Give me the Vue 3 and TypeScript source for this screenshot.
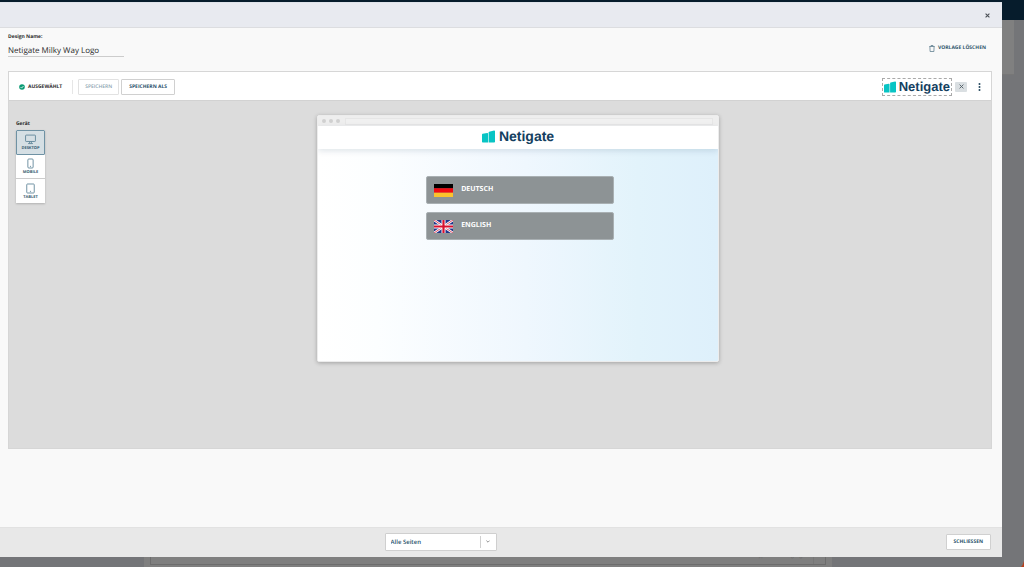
<script setup lang="ts">
import { ref } from 'vue'

type DeviceId = 'desktop' | 'mobile' | 'tablet'

const devices: { id: DeviceId; label: string }[] = [
  { id: 'desktop', label: 'Desktop' },
  { id: 'mobile', label: 'Mobile' },
  { id: 'tablet', label: 'Tablet' },
]

const languages = [
  { code: 'de', label: 'DEUTSCH' },
  { code: 'en', label: 'ENGLISH' },
]

const designName = ref('Netigate Milky Way Logo')
const device = ref<DeviceId>('desktop')
const pageFilter = ref('all')
</script>

<template>
  <div class="app">
    <div class="under-page" aria-hidden="true">
      <div class="under-nav"></div>
      <div class="under-panel"></div>
      <div class="under-bottom"><div class="under-frame"><span>Ref.: type-select-language</span><i></i></div></div>
      <svg class="corner" viewBox="0 0 4 6"><path d="M4 0V6H1Q3 4 4 0Z" fill="#b8401c" /></svg>
    </div>

    <section class="modal" role="dialog" aria-label="Design">
      <header class="modal-head">
        <button class="icon-btn" type="button" aria-label="Fenster schließen">
          <svg width="5" height="5" viewBox="0 0 5 5"><path d="M.6.6 4.4 4.4M4.4.6.6 4.4" stroke="#4a4f55" stroke-width="1.1" /></svg>
        </button>
      </header>

      <div class="modal-body">
        <div class="name-row">
          <div class="name-field">
            <label for="design-name">Design Name:</label>
            <input id="design-name" v-model="designName" type="text" />
          </div>
          <button class="delete-btn" type="button">
            <svg width="6" height="7" viewBox="0 0 6 7" fill="none" stroke="#4f7184" stroke-width=".7">
              <path d="M.3 1.5H5.7M2 1.4V.5H4V1.4M.9 1.6 1.1 6.5H4.9L5.1 1.6" />
            </svg>
            VORLAGE LÖSCHEN
          </button>
        </div>

        <div class="card">
          <div class="toolbar">
            <span class="selected">
              <svg width="6" height="6" viewBox="0 0 6 6"><circle cx="3" cy="3" r="2.8" fill="#0a9b74" /><path d="M1.6 3.1 2.6 4.1 4.5 2" fill="none" stroke="#fff" stroke-width=".8" /></svg>
              AUSGEWÄHLT
            </span>
            <button class="btn" type="button" disabled>SPEICHERN</button>
            <button class="btn btn-as" type="button">SPEICHERN ALS</button>
            <div class="toolbar-end">
              <div class="logo-slot">
                <svg width="12" height="12" viewBox="0 0 13 12"><path d="M0 4.2Q0 3.5.6 3.3L5.2 2.4Q6 2.3 6 3.1V12H.7Q0 12 0 11.3ZM6.6 2.2Q6.6 1.4 7.2 1.2L12 .1Q13 0 13 .8V11.2Q13 12 12.2 12H6.6Z" fill="#08c4c4" /></svg>
                <span class="logo-word">Netigate</span>
              </div>
              <button class="remove" type="button" aria-label="Logo entfernen">
                <svg width="5" height="5" viewBox="0 0 5 5"><path d="M.6.6 4.4 4.4M4.4.6.6 4.4" stroke="#4f5b64" stroke-width=".9" /></svg>
              </button>
              <button class="icon-btn" type="button" aria-label="Mehr">
                <svg width="3" height="8" viewBox="0 0 3 8" fill="#24485e"><circle cx="1.5" cy="1.1" r="1" /><circle cx="1.5" cy="4" r="1" /><circle cx="1.5" cy="6.9" r="1" /></svg>
              </button>
            </div>
          </div>

          <div class="canvas">
            <div class="devices">
              <span id="device-label" class="device-title">Gerät</span>
              <div class="device-list" role="group" aria-labelledby="device-label">
                <button
                  v-for="d in devices"
                  :key="d.id"
                  type="button"
                  class="device"
                  :class="{ active: device === d.id }"
                  :aria-pressed="device === d.id"
                  @click="device = d.id"
                >
                  <svg width="11" height="11" viewBox="0 0 10 10" fill="none" stroke="#5f8598" stroke-width=".8">
                    <template v-if="d.id === 'desktop'">
                      <rect x=".5" y="1" width="9" height="5.8" rx=".6" />
                      <path d="M4.2 6.8V8.4M5.8 6.8V8.4M2.8 8.7H7.2" />
                    </template>
                    <template v-else-if="d.id === 'mobile'">
                      <rect x="2.6" y=".9" width="4.8" height="8.2" rx=".9" />
                      <path d="M4.5 7.6H5.5" />
                    </template>
                    <template v-else>
                      <rect x="1.6" y=".9" width="6.8" height="8.2" rx=".7" />
                      <path d="M4.5 7.6H5.5" />
                    </template>
                  </svg>
                  <span>{{ d.label.toUpperCase() }}</span>
                </button>
              </div>
            </div>

            <div class="stage">
              <div class="preview">
                <div class="browser-bar"><i></i><i></i><i></i><b></b></div>
                <div class="preview-head">
                  <svg width="13" height="13" viewBox="0 0 13 12"><path d="M0 4.2Q0 3.5.6 3.3L5.2 2.4Q6 2.3 6 3.1V12H.7Q0 12 0 11.3ZM6.6 2.2Q6.6 1.4 7.2 1.2L12 .1Q13 0 13 .8V11.2Q13 12 12.2 12H6.6Z" fill="#08c4c4" /></svg>
                  <span class="logo-word large">Netigate</span>
                </div>
                <div class="preview-page">
                  <button v-for="l in languages" :key="l.code" type="button" class="lang">
                    <svg v-if="l.code === 'de'" width="19" height="13" viewBox="0 0 19 13">
                      <path d="M0 0H19V4.4H0Z" fill="#000" /><path d="M0 4.3H19V8.7H0Z" fill="#f10a12" /><path d="M0 8.7H19V13H0Z" fill="#fcc32c" />
                    </svg>
                    <svg v-else width="19" height="13" viewBox="0 0 19 13">
                      <path d="M0 0H19V13H0Z" fill="#21368c" />
                      <path d="M0 0 19 13M19 0 0 13" stroke="#fff" stroke-width="2.4" />
                      <path d="M0 0 19 13M19 0 0 13" stroke="#d8203b" stroke-width=".8" />
                      <path d="M9.5 0V13M0 6.5H19" stroke="#fff" stroke-width="4" />
                      <path d="M9.5 0V13M0 6.5H19" stroke="#d8102f" stroke-width="2.2" />
                    </svg>
                    <span>{{ l.label }}</span>
                  </button>
                </div>
              </div>
            </div>
          </div>
        </div>
      </div>

      <footer class="modal-foot">
        <span></span>
        <div class="select-box">
          <select v-model="pageFilter" aria-label="Seiten">
            <option value="all">Alle Seiten</option>
          </select>
          <span class="select-arrow">
            <svg width="4" height="3" viewBox="0 0 4 3"><path d="M.4.6 2 2.2 3.6.6" fill="none" stroke="#777" stroke-width=".8" /></svg>
          </span>
        </div>
        <button class="btn btn-close" type="button">SCHLIESSEN</button>
      </footer>
    </section>
  </div>
</template>

<style>
body {
  margin: 0;
}
</style>

<style scoped>
.app,
.app * {
  box-sizing: border-box;
}
.app {
  position: relative;
  min-height: 100vh;
  display: flex;
  background: #747578;
  font-family: "Open Sans", "Noto Sans", sans-serif;
  font-size: 5px;
  line-height: 8px;
  text-rendering: geometricPrecision;
  color: #2b2b2b;
}
button,
input,
select {
  margin: 0;
  padding: 0;
  font: inherit;
  text-rendering: inherit;
  color: inherit;
  border: 0;
  background: none;
}
.under-page {
  position: absolute;
  inset: 0;
  display: flex;
  flex-direction: column;
  overflow: hidden;
}
.under-nav {
  height: 20px;
  background: #061c2c;
}
.under-panel {
  height: 55px;
  margin-right: 10px;
  background: #808080;
  border-bottom: 1px solid #777;
}
.under-bottom {
  margin: auto 192px 0 144px;
  height: 24px;
  padding: 0 6px;
  background: #7f7f7f;
}
.under-frame {
  height: 22px;
  display: flex;
  align-items: flex-end;
  justify-content: flex-end;
  gap: 8px;
  border: 1px solid #6d6d6d;
  border-top: 0;
  color: #636363;
}
.under-frame span {
  line-height: 16px;
}
.under-frame i {
  width: 12px;
  height: 16px;
  border-left: 1px solid #777;
}
.corner {
  position: absolute;
  right: 0;
  bottom: 0;
  width: 4px;
  height: 6px;
}
.modal {
  position: absolute;
  inset: 2px 22px 10px 0;
  display: flex;
  flex-direction: column;
  background: #f9f9f9;
}
.modal-head {
  height: 26px;
  display: flex;
  align-items: center;
  justify-content: flex-end;
  padding-right: 12px;
  background: #e8eaf0;
  border-top: 1px solid #dfe3ea;
  border-bottom: 1px solid #dcdde0;
}
.icon-btn {
  display: flex;
}
.modal-body {
  flex: 1;
  display: flex;
  flex-direction: column;
  padding: 5px 10px 78px 8px;
}
.name-row {
  display: flex;
  justify-content: space-between;
  align-items: center;
  height: 38px;
  padding-bottom: 8px;
}
.name-field {
  display: flex;
  flex-direction: column;
  width: 116px;
  align-self: flex-start;
}
.name-field label {
  font-weight: 700;
}
.name-field input {
  height: 16px;
  padding-top: 4px;
  font-size: 8px;
  border-bottom: 1px solid #ccc;
}
.delete-btn {
  display: flex;
  align-items: center;
  gap: 3px;
  margin-right: 6px;
  font-weight: 700;
  color: #2f566c;
}
.card {
  flex: 1;
  display: flex;
  flex-direction: column;
  border: 1px solid #d6d6d6;
}
.toolbar {
  height: 29px;
  display: flex;
  align-items: center;
  padding: 1px 10px 0;
  background: #fff;
  border-bottom: 1px solid #d2d2d2;
}
.selected {
  display: flex;
  align-items: center;
  gap: 3px;
  height: 14px;
  padding-right: 10px;
  margin-right: 5px;
  border-right: 1px solid #e6e6e6;
  font-weight: 700;
}
.btn {
  height: 16px;
  padding: 0 7px;
  background: #fff;
  border: 1px solid #d0d0d0;
  border-radius: 1px;
  font-weight: 700;
  color: #28506a;
}
.btn:disabled {
  padding: 0 6px;
  font-weight: 600;
  color: #8ba4b1;
  border-color: #e2e2e2;
}
.btn-as {
  margin-left: 2px;
}
.toolbar-end {
  display: flex;
  align-items: center;
  gap: 3px;
  margin-left: auto;
}
.toolbar-end .icon-btn {
  margin-left: 8px;
}
.logo-slot {
  display: flex;
  align-items: center;
  gap: 3px;
  height: 18px;
  padding: 0 1px;
  border: 1px dashed #aaa;
}
.logo-word {
  font-family: "Liberation Sans", Arial, sans-serif;
  font-weight: 700;
  font-size: 13px;
  line-height: 16px;
  color: #14405f;
}
.logo-word.large {
  font-size: 14px;
}
.remove {
  display: flex;
  align-items: center;
  justify-content: center;
  width: 12px;
  height: 10px;
  background: #dadfe2;
  border-radius: 1px;
}
.canvas {
  flex: 1;
  display: flex;
  align-items: flex-start;
  padding: 14px 0 0 7px;
  background: #dcdcdc;
}
.devices {
  display: flex;
  flex-direction: column;
  gap: 2px;
  padding-top: 5px;
}
.device-title {
  font-weight: 700;
}
.device-list {
  width: 29px;
  background: #fff;
  box-shadow: 0 1px 2px #0003;
}
.device {
  display: flex;
  flex-direction: column;
  align-items: center;
  justify-content: center;
  gap: 1px;
  width: 100%;
  height: 24px;
  padding-top: 1px;
  border-bottom: 1px solid #ccc;
  font-size: 4px;
  line-height: 6px;
  font-weight: 700;
  color: #355b70;
}
.device:last-child {
  border-bottom: 0;
}
.device.active {
  height: 25px;
  background: #d5dfe4;
  border: 1px solid #6f92a4;
  border-radius: 1px;
}
.stage {
  flex: 1;
  display: flex;
  justify-content: center;
}
.preview {
  width: 42.4%;
  min-height: 247px;
  display: flex;
  flex-direction: column;
  border: 1px solid #ececec;
  border-radius: 2px;
  overflow: hidden;
  background: #fff;
  box-shadow: 0 1px 4px #0004;
}
.browser-bar {
  height: 10px;
  display: flex;
  align-items: center;
  gap: 3px;
  padding: 0 5px 0 4px;
  background: #eee;
}
.browser-bar i {
  width: 4px;
  height: 4px;
  border-radius: 50%;
  background: #d0d0d0;
}
.browser-bar b {
  flex: 1;
  height: 7px;
  margin-left: 2px;
  border: 1px solid #e6e6e6;
  background: #f0f0f0;
}
.preview-head {
  position: relative;
  height: 23px;
  display: flex;
  align-items: center;
  justify-content: center;
  gap: 4px;
  padding-bottom: 3px;
  background: #fff;
  box-shadow: 0 2px 6px #00305020;
}
.preview-page {
  flex: 1;
  display: flex;
  flex-direction: column;
  align-items: center;
  gap: 8px;
  padding: 27px 0 27px 4px;
  background: linear-gradient(90deg, #fff 0%, #fcfeff 15%, #eff7fe 52%, #e2f3fb 80%, #def0fb 100%);
}
.lang {
  display: flex;
  align-items: center;
  gap: 8px;
  width: 47.5%;
  height: 28px;
  padding: 0 7px;
  background: #8d9395;
  border: 1px solid #a9b0b3;
  border-radius: 2px;
  font-size: 7px;
  line-height: 10px;
  font-weight: 700;
  color: #fff;
}
.modal-foot {
  height: 30px;
  display: grid;
  grid-template-columns: 7fr 112px 9fr;
  align-items: center;
  padding: 0 11px 2px 0;
  background: #e8e8e8;
  border-top: 1px solid #e2e2e2;
}
.select-box {
  display: flex;
  align-items: center;
  height: 18px;
  background: #fff;
  border: 1px solid #cfcfcf;
  border-radius: 1px;
}
.select-box select {
  flex: 1;
  height: 16px;
  padding-left: 5px;
  appearance: none;
  font-size: 6px;
  font-weight: 600;
  color: #28506a;
}
.select-arrow {
  display: flex;
  align-items: center;
  justify-content: center;
  width: 16px;
  height: 12px;
  border-left: 1px solid #d0d0d0;
}
.btn-close {
  justify-self: end;
}
</style>
